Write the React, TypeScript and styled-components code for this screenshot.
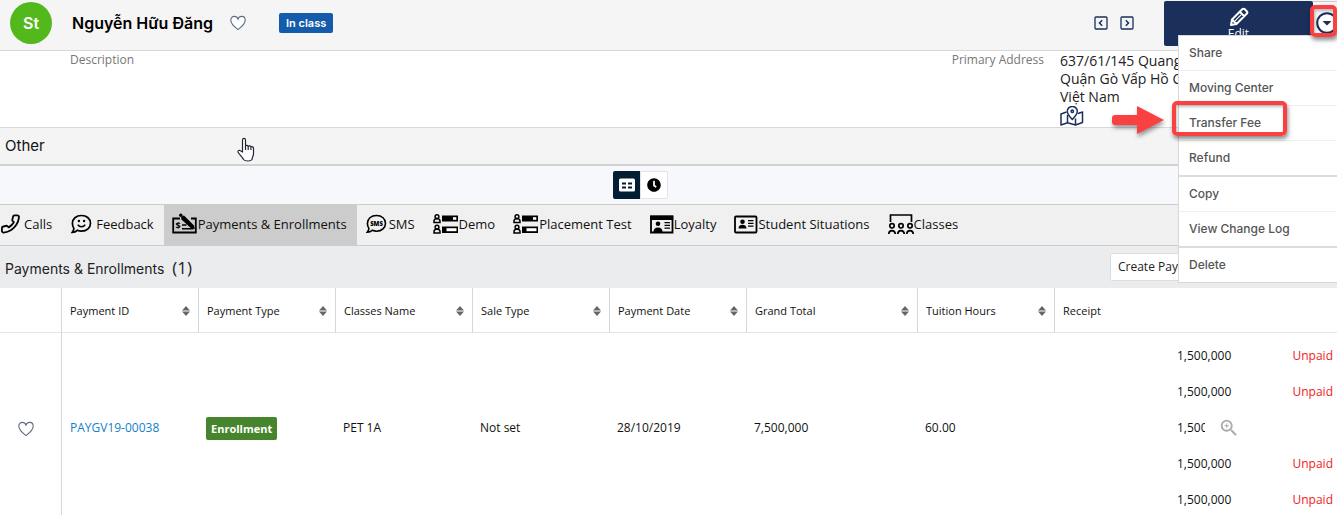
import React from "react";
import styled, { createGlobalStyle } from "styled-components";
import { FaClock } from "react-icons/fa";
import { MdZoomIn } from "react-icons/md";

const body = `"Open Sans", "Noto Sans", sans-serif`;
const ui = `Inter, "Open Sans", sans-serif`;
const navy = "#1a2f5a";
const red = "#fa4141";

const Global = createGlobalStyle`
  html { scrollbar-width: none; }
  body { margin: 0; background: #fff; color: #222; font: 12px/18px ${body}; }
  *, *::before, *::after { box-sizing: border-box; }
  button { font: inherit; color: inherit; border: 0; padding: 0; background: none; cursor: pointer; vertical-align: middle; }
  svg { display: block; }
`;

const Page = styled.div`
  position: relative;
  overflow: hidden;
`;

const Header = styled.header`
  display: flex;
  align-items: center;
  height: 51px;
  padding: 0 0 4px 10px;
  background: #f5f5f5;
  border-bottom: 1px solid #d8d8d8;
`;

const Avatar = styled.div`
  display: grid;
  place-items: center;
  width: 42px;
  height: 42px;
  border-radius: 50%;
  background: #53b81b;
  color: #fff;
  font: 600 16px/20px ${ui};
`;

const Name = styled.h1`
  margin: 0 17px 0 20px;
  color: #000;
  font: 600 16px/24px ${ui};
`;

const Badge = styled.span`
  margin-left: 33px;
  padding: 0 7px;
  border-radius: 2px;
  background: #145cab;
  color: #fff;
  font: 600 11px/20px ${ui};
`;

const Pager = styled.div`
  display: flex;
  gap: 12px;
  margin: 0 30px 0 auto;
`;

const EditButton = styled.button`
  display: flex;
  flex-direction: column;
  align-items: center;
  width: 149px;
  height: 45px;
  padding-top: 6px;
  border-radius: 2px;
  background: ${navy};
  color: #fff;
  line-height: 14px;
`;

const MoreButton = styled.button`
  width: 24px;
  height: 45px;
  padding: 0 0 2px 2px;
  overflow: hidden;
  border-top: 1px solid #ccc;
`;

const Details = styled.section`
  display: grid;
  grid-template-columns: 1fr auto 277px;
  column-gap: 16px;
  height: 77px;
  padding-left: 70px;
  border-bottom: 1px solid #d8d8d8;
`;

const Label = styled.span`
  color: #777;
`;

const Address = styled.address`
  padding-top: 1px;
  color: #222;
  font: 14px/18px ${body};
`;

const SectionTitle = styled.h2`
  margin: 0;
  padding-left: 5px;
  border-bottom: 2px solid #d2d2d4;
  background: #f4f4f4;
  color: #111;
  font: 400 15px/36px ${ui};
`;

const ViewBar = styled.div`
  display: flex;
  justify-content: center;
  align-items: center;
  height: 39px;
  padding-right: 56px;
  border-bottom: 1px solid #ccc;
  background: #f7f8fb;
`;

const ViewButton = styled.button<{ $on?: boolean }>`
  display: grid;
  place-items: center;
  width: ${(p) => (p.$on ? 27 : 28)}px;
  height: 28px;
  border: ${(p) => (p.$on ? "0" : "1px solid #e2e2e4")};
  border-radius: ${(p) => (p.$on ? "2px 0 0 2px" : "0 2px 2px 0")};
  background: ${(p) => (p.$on ? "#031d33" : "#fff")};
  color: ${(p) => (p.$on ? "#fff" : "#000")};
`;

const Tabs = styled.nav`
  display: flex;
  height: 41px;
  border-bottom: 1px solid #ccc;
  background: #f0f0f0;
`;

const Tab = styled.a<{ $on?: boolean }>`
  display: flex;
  align-items: center;
  padding: 0 10px 2px 8px;
  background: ${(p) => (p.$on ? "#ccc" : "transparent")};
  color: #111;
  font: 13px/20px ${body};
  text-decoration: none;
  white-space: nowrap;
  &:first-child { margin-left: -10px; }
`;

const TabIcon = styled.svg<{ $narrow?: boolean }>`
  width: ${(p) => (p.$narrow ? 24 : 26)}px;
  height: 22px;
  flex: none;
`;

const PanelHead = styled.div`
  display: flex;
  align-items: center;
  height: 42px;
  padding: 0 97px 0 5px;
  background: #ebecee;
`;

const PanelTitle = styled.h2`
  margin: 2px 0 0;
  color: #222;
  font: 400 14px/20px ${ui};
`;

const Count = styled.span`
  margin-left: 4px;
  font: 17px/20px ${body};
`;

const CreateButton = styled.button`
  width: 130px;
  height: 28px;
  margin-left: auto;
  padding: 0 7px;
  border: 1px solid #ddd;
  border-radius: 2px;
  background: #fff;
  text-align: left;
  white-space: nowrap;
`;

const Table = styled.table`
  width: 100%;
  table-layout: fixed;
  border-spacing: 0;
`;

const Col = styled.col<{ $w?: number }>`
  width: ${(p) => (p.$w ? `${p.$w}px` : "auto")};
`;

const Th = styled.th`
  height: 45px;
  padding: 2px 8px 0;
  border-bottom: 1px solid #e2e5e8;
  border-right: 1px solid #d0d7dd;
  color: #111;
  font: 11px/18px ${body};
  text-align: left;
  &:last-child { border-right: 0; }
`;

const Sortable = styled.button`
  display: flex;
  width: 100%;
  justify-content: space-between;
  align-items: center;
`;

const Td = styled.td`
  padding: 5px 7px 3px;
  color: #111;
  &:first-child { border-right: 1px solid #d0d7dd; padding-left: 18px; }
  &:nth-child(2) { padding-left: 8px; }
  &:last-child { padding: 5px 4px 3px 122px; }
`;

const PaymentLink = styled.a`
  color: #1580c8;
  text-decoration: none;
`;

const TypeBadge = styled.span`
  display: inline-block;
  padding: 0 5px;
  border-radius: 2px;
  background: #46852e;
  color: #fff;
  font: 700 11px/23px ${body};
`;

const Receipt = styled.div`
  position: relative;
  display: flex;
  justify-content: space-between;
  line-height: 36px;
`;

const Unpaid = styled.span`
  color: #f02020;
`;

const ZoomCover = styled.button`
  position: absolute;
  inset: 0 -4px 0 28px;
  padding-left: 13px;
  background: #fff;
  color: #aaa;
`;

const Menu = styled.ul`
  position: absolute;
  top: 35px;
  right: 0;
  width: 159px;
  margin: 0;
  padding: 0;
  border: 1px solid #d8d8d8;
  border-right: 0;
  background: #fff;
  list-style: none;
`;

const MenuItem = styled.li<{ $divider?: boolean }>`
  height: ${(p) => (p.$divider ? 36 : 35)}px;
  border-bottom: ${(p) => (p.$divider ? "2px solid #dcdcde" : "1px solid #f0f0f0")};
  &:last-child { height: 34px; border-bottom: 0; }
  button {
    width: 100%;
    height: 100%;
    padding-left: 10px;
    color: #555;
    font: 500 12px/18px ${ui};
    text-align: left;
  }
`;

const Highlight = styled.div<{ $top: number; $right: number; $w: number; $h: number }>`
  position: absolute;
  top: ${(p) => p.$top}px;
  right: ${(p) => p.$right}px;
  width: ${(p) => p.$w}px;
  height: ${(p) => p.$h}px;
  border: 4px solid ${red};
  border-radius: 5px;
  box-shadow: 1px 3px 4px rgba(0, 0, 0, 0.45), inset 1px 2px 3px rgba(0, 0, 0, 0.25);
  pointer-events: none;
`;

const Arrow = styled.svg`
  position: absolute;
  top: 102px;
  right: 168px;
  filter: drop-shadow(1px 3px 2px rgba(0, 0, 0, 0.4));
`;

const Cursor = styled.svg`
  position: absolute;
  top: 137px;
  left: 236px;
`;

const Heart = () => (
  <svg width="16" height="16" viewBox="0 0 16 16" fill="#fff" stroke="#5b6b80" strokeWidth="1.1">
    <path d="M8 14.6C5.5 12.6.8 9.2.8 5.2.8 2.8 2.5 1.4 4.3 1.4 6.2 1.4 7.5 2.6 8 4c.5-1.4 1.8-2.6 3.7-2.6 1.8 0 3.5 1.4 3.5 3.8 0 4-4.7 7.4-7.2 9.400z" />
  </svg>
);

const PencilIcon = () => (
  <svg width="20" height="20" viewBox="0 0 20 20" fill="none" stroke="#fff" strokeWidth="2" strokeLinejoin="round">
    <path d="M2 18l1-5.500L13.200 2.300c.8-.8 1.800-.8 2.600 0l1.900 1.900c.8.800.8 1.800 0 2.600L7.500 17zM10.800 4.800l4.400 4.400M3 12.500L7.500 17" />
    <path d="M6 13.800l6-6" strokeWidth="1.200" />
  </svg>
);

const PageIcon = ({ next }: { next?: boolean }) => (
  <svg width="14" height="14" viewBox="0 0 14 14" fill="none" stroke={navy} strokeWidth="1.3">
    <rect x="1" y="1" width="12" height="12" rx="1" />
    <path d={next ? "M5.800 4.300L8.500 7 5.800 9.700" : "M8.200 4.300L5.500 7l2.700 2.700"} strokeWidth="1.500" />
  </svg>
);

const SortIcon = () => (
  <svg width="8" height="10" viewBox="0 0 8 10" fill="#666">
    <path d="M4 0l4 4.500H0zM4 10L0 5.500h8z" />
  </svg>
);

const MapIcon = () => (
  <svg width="24" height="20" viewBox="0 0 24 20" fill="none" stroke={navy} strokeWidth="1.500" strokeLinejoin="round">
    <path d="M6.500 6L1 8v11l6.500-2.200L15.500 19l7-2.500V6L18 7.500M7.500 9v7.800M15.500 12.500V19" />
    <path d="M12.300 13.500C9.300 10 7.300 8 7.300 5.400a5 5 0 0 1 10 0c0 2.600-2 4.600-5 8.100z" />
    <circle cx="12.300" cy="5.300" r="1.200" />
  </svg>
);

const DropIcon = () => (
  <svg width="24" height="24" viewBox="0 0 24 24">
    <circle cx="12" cy="12" r="9.800" fill="#fff" stroke={navy} strokeWidth="2" />
    <path d="M7.500 10h9L12 14.500z" fill={navy} />
  </svg>
);

const bubble = "M11.500 2.500c5.400 0 9 3.400 9 7.800s-3.600 7.900-9 7.900c-1.600 0-3-.3-4.200-.9-1.200 1.200-3 2-5 2 .9-1.200 1.500-2.500 1.600-3.900-1-1.400-1.500-3-1.500-5.100 0-4.400 3.700-7.800 9.100-7.800z";

const person = (y: number) => (
  <g fill="none" stroke="#000" strokeWidth="1.500">
    <circle cx="4" cy={y + 2.2} r="1.900" />
    <path d={`M1 ${y + 8}V${y + 6.5}c0-1.500 1-2.200 3-2.200s3 .7 3 2.200V${y + 8}z`} />
  </g>
);

const icons: Record<string, React.ReactNode> = {
  call: (
    <g transform="matrix(-0.86 0 0 0.86 22.800 0.700)" fill="none" stroke="#000" strokeWidth="2.100" strokeLinejoin="round">
      <path d="M22 16.920v3a2 2 0 0 1-2.180 2 19.790 19.790 0 0 1-8.630-3.070 19.500 19.500 0 0 1-6-6 19.790 19.790 0 0 1-3.070-8.670A2 2 0 0 1 4.110 2h3a2 2 0 0 1 2 1.720c.13.960.36 1.900.7 2.810a2 2 0 0 1-.45 2.110L8.090 9.910a16 16 0 0 0 6 6l1.270-1.270a2 2 0 0 1 2.110-.45c.91.34 1.850.57 2.810.7A2 2 0 0 1 22 16.920z" />
    </g>
  ),
  smile: (
    <g fill="none" stroke="#000" strokeWidth="1.700">
      <path d={bubble} />
      <path d="M7.800 11.600c1.600 2.900 5.800 2.900 7.400 0" strokeWidth="1.500" />
      <circle cx="8.900" cy="8" r="1.200" fill="#000" stroke="none" />
      <circle cx="14.100" cy="8" r="1.200" fill="#000" stroke="none" />
    </g>
  ),
  sms: (
    <g>
      <path d={bubble} fill="none" stroke="#000" strokeWidth="1.600" />
      <text x="11.500" y="12.600" fontSize="6" fontWeight="800" fontFamily="Open Sans, sans-serif" textAnchor="middle">SMS</text>
    </g>
  ),
  pay: (
    <g>
      <path d="M8 5.500H1.200v14h22.600v-14H19" fill="none" stroke="#000" strokeWidth="1.800" />
      <path d="M9 3.800l3-1.300L22 12.500l.8 3.500-3.800-.7L9.500 6.500z" />
      <circle cx="8.800" cy="2.300" r="1.700" />
      <path d="M10 12h4.500M10 15.800h11.500" stroke="#000" strokeWidth="1.500" />
      <text x="3.500" y="16" fontSize="9" fontWeight="700" fontFamily="Open Sans, sans-serif">$</text>
    </g>
  ),
  list: (
    <g>
      {person(1.5)}
      {person(12)}
      <path d="M9 2.500h16v6H9z" />
      <path d="M20 4.200h3.300v2.600H20z" fill="#fff" />
      <path d="M9 13.500h16v6.500H9z" />
      <path d="M13.500 15.200h10v3h-10z" fill="#fff" />
    </g>
  ),
  card: (
    <g>
      <path d="M1 3.500h21.500v16H1z" fill="none" stroke="#000" strokeWidth="1.800" />
      <path d="M.2 2.600h23V7H.2z" />
      <circle cx="8" cy="10.800" r="2.300" />
      <path d="M3.500 19c0-3 1.500-4.500 4.500-4.500s4.500 1.500 4.500 4.500zM14.500 9H20v1.300h-5.500zM14.500 11.700H20V13h-5.500zM14.500 14.400H20v1.300h-5.500z" />
    </g>
  ),
  id: (
    <g>
      <rect x="1" y="3.500" width="21.500" height="16" rx="1" fill="none" stroke="#000" strokeWidth="1.800" />
      <circle cx="8.500" cy="8.800" r="2.300" />
      <path d="M4.500 15.500c0-2.500 1.500-3.700 4-3.700s4 1.200 4 3.700zM14 7h5.500v1.300H14zM14 9.700h5.500V11H14zM14 12.400h5.500v1.300H14z" />
    </g>
  ),
  group: (
    <g fill="none" stroke="#000" strokeWidth="1.700">
      <path d="M2.500 9V2h21v7" />
      {[4, 13, 22].map((x) => (
        <g key={x}>
          <circle cx={x} cy="12.800" r="2.200" />
          <path d={`M${x - 3.3} 21c.3-2.500 1.400-3.400 3.300-3.400s3 .9 3.300 3.400`} />
        </g>
      ))}
    </g>
  ),
};

const tabs = [
  ["call", "Calls"],
  ["smile", "Feedback"],
  ["pay", "Payments & Enrollments"],
  ["sms", "SMS"],
  ["list", "Demo"],
  ["list", "Placement Test"],
  ["card", "Loyalty"],
  ["id", "Student Situations"],
  ["group", "Classes"],
];

const narrowIcons: Record<string, number> = { sms: 24, card: 24, id: 24 };

const columns: [string, number][] = [
  ["Payment ID", 137],
  ["Payment Type", 137],
  ["Classes Name", 137],
  ["Sale Type", 137],
  ["Payment Date", 137],
  ["Grand Total", 171],
  ["Tuition Hours", 137],
];

const menu: [string, boolean][] = [
  ["Share", false],
  ["Moving Center", false],
  ["Transfer Fee", false],
  ["Refund", true],
  ["Copy", false],
  ["View Change Log", true],
  ["Delete", false],
];

export default function App() {
  return (
    <Page>
      <Global />
      <Header>
        <Avatar>St</Avatar>
        <Name>Nguyễn Hữu Đăng</Name>
        <button aria-label="Favorite"><Heart /></button>
        <Badge>In class</Badge>
        <Pager>
          <button aria-label="Previous"><PageIcon /></button>
          <button aria-label="Next"><PageIcon next /></button>
        </Pager>
        <EditButton>
          <PencilIcon />
          Edit
        </EditButton>
        <MoreButton aria-label="More actions"><DropIcon /></MoreButton>
      </Header>

      <Details>
        <Label>Description</Label>
        <Label>Primary Address</Label>
        <Address>
          637/61/145 Quang<br />
          Quận Gò Vấp Hồ C<br />
          Việt Nam
          <MapIcon />
        </Address>
      </Details>

      <SectionTitle>Other</SectionTitle>

      <ViewBar>
        <ViewButton $on aria-label="Table view">
          <svg width="16" height="14" viewBox="0 0 16 14">
            <rect y="0.500" width="16" height="13" rx="1.500" fill="#fff" />
            <path d="M3 4.500h4v2H3zM9 4.500h4v2H9zM3 8.500h4v2H3zM9 8.500h4v2H9z" fill="#031d33" />
          </svg>
        </ViewButton>
        <ViewButton aria-label="Timeline view"><FaClock size={14} /></ViewButton>
      </ViewBar>

      <Tabs>
        {tabs.map(([icon, label]) => {
          const w = narrowIcons[icon] ?? 26;
          return (
            <Tab key={label} href="#" $on={icon === "pay"}>
              <TabIcon $narrow={w === 24} viewBox={`0 0 ${w} 22`}>{icons[icon]}</TabIcon>
              {label}
            </Tab>
          );
        })}
      </Tabs>

      <PanelHead>
        <PanelTitle>Payments &amp; Enrollments <Count>(1)</Count></PanelTitle>
        <CreateButton>Create Pay</CreateButton>
      </PanelHead>

      <Table>
        <colgroup>
          <Col $w={62} />
          {columns.map(([label, w]) => <Col key={label} $w={w} />)}
          <Col />
        </colgroup>
        <thead>
          <tr>
            <Th />
            {columns.map(([label]) => (
              <Th key={label}><Sortable>{label}<SortIcon /></Sortable></Th>
            ))}
            <Th>Receipt</Th>
          </tr>
        </thead>
        <tbody>
          <tr>
            <Td><button aria-label="Favorite"><Heart /></button></Td>
            <Td><PaymentLink href="#">PAYGV19-00038</PaymentLink></Td>
            <Td><TypeBadge>Enrollment</TypeBadge></Td>
            <Td>PET 1A</Td>
            <Td>Not set</Td>
            <Td>28/10/2019</Td>
            <Td>7,500,000</Td>
            <Td>60.00</Td>
            <Td>
              {[0, 1, 2, 3, 4].map((i) => (
                <Receipt key={i}>
                  <span>{i === 2 ? "1,500" : "1,500,000"}</span>
                  {i === 2 ? (
                    <ZoomCover aria-label="Preview"><MdZoomIn size={22} /></ZoomCover>
                  ) : (
                    <Unpaid>Unpaid</Unpaid>
                  )}
                </Receipt>
              ))}
            </Td>
          </tr>
        </tbody>
      </Table>

      <Menu>
        {menu.map(([label, divider]) => (
          <MenuItem key={label} $divider={divider}><button>{label}</button></MenuItem>
        ))}
      </Menu>

      <Highlight $top={5} $right={0} $w={27} $h={32} />
      <Highlight $top={101} $right={50} $w={115} $h={35} />
      <Arrow width="60" height="36" viewBox="0 0 60 36" fill={red}>
        <path d="M6 13h22V4l27 14-27 14v-9H6a3 3 0 0 1-3-3v-4a3 3 0 0 1 3-3z" />
      </Arrow>
      <Cursor width="20" height="26" viewBox="0 0 20 26">
        <path d="M6.500 15V3.200C6.500.8 9.500.8 9.500 3.200V9c.5-1 2.500-.8 2.700.5.8-1 2.500-.7 2.700.6.9-.8 2.600-.3 2.600 1.400V17c0 2-1.500 3.500-1.500 5.500-1 2-7 2-8.500 0C6.500 20 3.500 18 2 15c-.5-1.500 1.200-2.200 2.500-1.200z" fill="#fff" stroke="#223" strokeWidth="1.200" strokeLinejoin="round" />
        <path d="M9.500 9v4M12.200 9.500V13M14.900 10.500V13" stroke="#223" strokeWidth="1.200" />
      </Cursor>
    </Page>
  );
}
